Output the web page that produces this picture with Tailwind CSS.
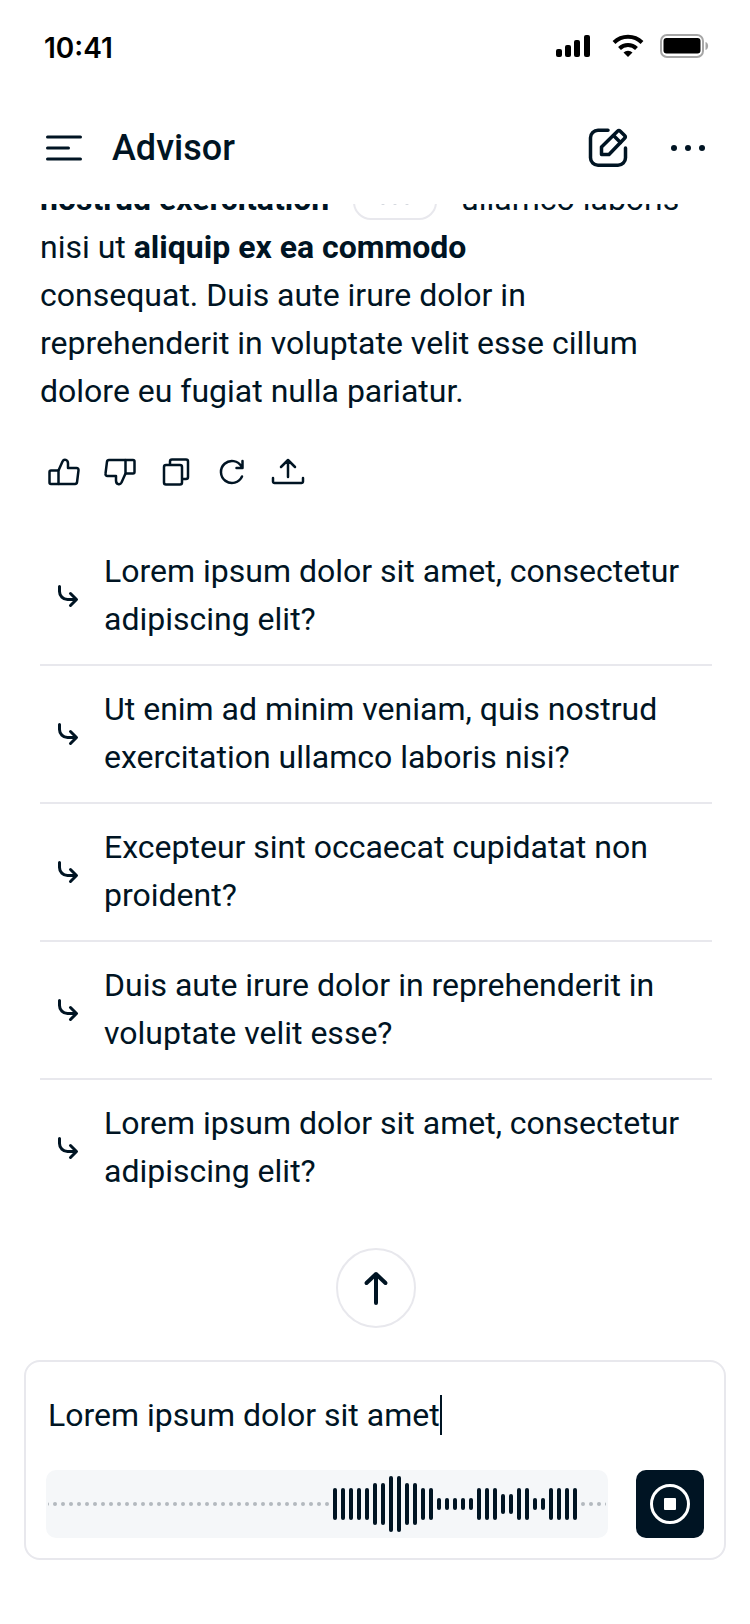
<!DOCTYPE html>
<html lang="en">

<head>
    <meta charset="utf-8">
    <meta name="viewport" content="width=device-width">
    <script src="https://cdn.jsdelivr.net/npm/@tailwindcss/browser@4"></script>
    <title>Advisor</title>
</head>

<body class="bg-white text-[#001423] font-['Roboto','Liberation_Sans',sans-serif]">
    <div class="flex flex-col min-h-screen">
        <!-- Status bar -->
        <div class="flex items-center justify-between h-24 pl-11 pr-10 text-black">
            <span class="font-['Inter','Liberation_Sans',sans-serif] text-[28px] font-semibold">10:41</span>
            <div class="flex items-center gap-4 pb-1">
                <svg class="w-10 h-6" viewBox="0 0 40 24" fill="currentColor" aria-hidden="true">
                    <rect x="0" y="15" width="6" height="8" rx="2" />
                    <rect x="9" y="11" width="6" height="12" rx="2" />
                    <rect x="18" y="6" width="6" height="17" rx="2" />
                    <rect x="28" y="1" width="6" height="22" rx="2" />
                </svg>
                <svg class="w-8 h-6" viewBox="0 0 32 24" fill="none" stroke="currentColor" stroke-width="4" aria-hidden="true">
                    <path d="M2 8.5a20 20 0 0 1 28 0" />
                    <path d="M7.500 14.500a12 12 0 0 1 17 0" />
                    <path d="M16 23l-4.500-4.500a6.500 6.500 0 0 1 9 0z" fill="currentColor" stroke="none" />
                </svg>
                <svg class="w-[50px] h-6" viewBox="0 0 50 24" fill="none" aria-hidden="true">
                    <rect x="1" y="1" width="42" height="22" rx="6" stroke="#a6a6a6" stroke-width="2" />
                    <rect x="3.500" y="4" width="37" height="15.500" rx="3" fill="#000" />
                    <path d="M45.500 8c3.500 1 3.500 7 0 8z" fill="#a6a6a6" />
                </svg>
            </div>
        </div>

        <!-- Header -->
        <header class="flex items-center h-[108px] pb-1 pl-10 pr-[38px]">
            <button type="button" class="flex items-center" aria-label="Menu">
                <svg class="w-12 h-12" viewBox="0 0 48 48" fill="none" stroke="currentColor" stroke-width="3" stroke-linecap="round">
                    <path d="M7.500 13h33M7.500 24h21M7.500 35h33" />
                </svg>
            </button>
            <h1 class="flex-1 ml-6 text-4xl font-medium">Advisor</h1>
            <div class="flex items-center gap-8">
                <button type="button" aria-label="New chat">
                    <svg class="w-12 h-12" viewBox="0 0 48 48" fill="none" stroke="currentColor" stroke-width="3.5" stroke-linecap="round" stroke-linejoin="round">
                        <path d="M24 6.200H14A7.500 7.500 0 0 0 6.500 13.700v20a7.500 7.500 0 0 0 7.500 7.500h20a7.500 7.500 0 0 0 7.500-7.500V24" />
                        <path d="M17.500 30.500v-7.500L33.500 7.200a2 2 0 0 1 2.800 0l4.300 4.300a2 2 0 0 1 0 2.800L25 30.500z" />
                        <path d="M29.500 11.500l7 7" />
                    </svg>
                </button>
                <button type="button" aria-label="More">
                    <svg class="w-12 h-12" viewBox="0 0 48 48" fill="currentColor">
                        <circle cx="10" cy="24" r="3" />
                        <circle cx="24" cy="24" r="3" />
                        <circle cx="38" cy="24" r="3" />
                    </svg>
                </button>
            </div>
        </header>

        <!-- Conversation -->
        <main class="flex-1 pl-10 pr-[38px] text-[32px]/12">
            <div class="flex flex-col justify-end h-[211px] overflow-hidden">
                <p>
                    <strong>nostrud exercitation</strong>
                    <button type="button" class="inline-flex items-center justify-center gap-2 w-[84px] h-9 pt-0.5 mx-4 border-2 border-[#e8e8ed] rounded-full align-middle" aria-label="Sources">
                        <span class="size-1 rounded-full bg-gray-300"></span>
                        <span class="size-1 rounded-full bg-gray-300"></span>
                        <span class="size-1 rounded-full bg-gray-300"></span>
                    </button>
                    ullamco laboris nisi ut <strong>aliquip ex ea commodo</strong><br>
                    consequat. Duis aute irure dolor in reprehenderit in voluptate velit esse cillum dolore eu fugiat nulla pariatur.
                </p>
            </div>

            <div class="flex gap-4 mt-[37px] mb-9 pl-1">
                <button type="button" aria-label="Good answer">
                    <svg class="size-10" viewBox="0 0 40 40" fill="none" stroke="currentColor" stroke-width="2.500" stroke-linejoin="round">
                        <path d="M7 18.500h7.500V32H7a1.500 1.500 0 0 1-1.500-1.500V20A1.500 1.500 0 0 1 7 18.500z" />
                        <path d="M14.500 18.500L18.500 9.500c1.500-3 5.500-2 5.500 2V16h8.500a2 2 0 0 1 2 2.300l-1.500 12a2 2 0 0 1-2 1.700H14.500" />
                    </svg>
                </button>
                <button type="button" aria-label="Bad answer">
                    <svg class="size-10 rotate-180" viewBox="0 0 40 40" fill="none" stroke="currentColor" stroke-width="2.500" stroke-linejoin="round">
                        <path d="M7 18.500h7.500V32H7a1.500 1.500 0 0 1-1.500-1.500V20A1.500 1.500 0 0 1 7 18.500z" />
                        <path d="M14.500 18.500L18.500 9.500c1.500-3 5.500-2 5.500 2V16h8.500a2 2 0 0 1 2 2.300l-1.500 12a2 2 0 0 1-2 1.700H14.500" />
                    </svg>
                </button>
                <button type="button" aria-label="Copy">
                    <svg class="size-10" viewBox="0 0 40 40" fill="none" stroke="currentColor" stroke-width="2.500" stroke-linejoin="round">
                        <rect x="8" y="13" width="18" height="19.500" rx="2" />
                        <path d="M14 13V9.500A2 2 0 0 1 16 7.500h14a2 2 0 0 1 2 2V25a2 2 0 0 1-2 2h-4" />
                    </svg>
                </button>
                <button type="button" aria-label="Retry">
                    <svg class="size-10" viewBox="0 0 40 40" fill="none" stroke="currentColor" stroke-width="2.500" stroke-linecap="round" stroke-linejoin="round">
                        <path d="M30 24.500a11 11 0 1 1-.500-10M30.500 9v7H24.500" />
                    </svg>
                </button>
                <button type="button" aria-label="Share">
                    <svg class="size-10" viewBox="0 0 40 40" fill="none" stroke="currentColor" stroke-width="2.500" stroke-linecap="round" stroke-linejoin="round">
                        <path d="M5 26v3.500A1.500 1.500 0 0 0 6.500 31h27a1.500 1.500 0 0 0 1.500-1.500V26M20 25V8.500M13 15l7-7 7 7" />
                    </svg>
                </button>
            </div>

            <!-- Follow-up questions -->
            <ul class="divide-y-2 divide-[#e8e8ed]">
                <li>
                    <button type="button" class="flex items-center gap-5 w-full pt-[19px] pb-[21px] pl-3 text-left">
                        <svg class="w-8 h-8 shrink-0" viewBox="0 0 32 32" fill="none" stroke="currentColor" stroke-width="3" stroke-linecap="round" stroke-linejoin="round">
                            <path d="M7.500 7.500v5a8 8 0 0 0 8 8H24M18.500 14.500l6 6-6 6" />
                        </svg>
                        <span>Lorem ipsum dolor sit amet, consectetur adipiscing elit?</span>
                    </button>
                </li>
                <li>
                    <button type="button" class="flex items-center gap-5 w-full pt-[19px] pb-[21px] pl-3 text-left">
                        <svg class="w-8 h-8 shrink-0" viewBox="0 0 32 32" fill="none" stroke="currentColor" stroke-width="3" stroke-linecap="round" stroke-linejoin="round">
                            <path d="M7.500 7.500v5a8 8 0 0 0 8 8H24M18.500 14.500l6 6-6 6" />
                        </svg>
                        <span>Ut enim ad minim veniam, quis nostrud exercitation ullamco laboris nisi?</span>
                    </button>
                </li>
                <li>
                    <button type="button" class="flex items-center gap-5 w-full pt-[19px] pb-[21px] pl-3 text-left">
                        <svg class="w-8 h-8 shrink-0" viewBox="0 0 32 32" fill="none" stroke="currentColor" stroke-width="3" stroke-linecap="round" stroke-linejoin="round">
                            <path d="M7.500 7.500v5a8 8 0 0 0 8 8H24M18.500 14.500l6 6-6 6" />
                        </svg>
                        <span>Excepteur sint occaecat cupidatat non proident?</span>
                    </button>
                </li>
                <li>
                    <button type="button" class="flex items-center gap-5 w-full pt-[19px] pb-[21px] pl-3 text-left">
                        <svg class="w-8 h-8 shrink-0" viewBox="0 0 32 32" fill="none" stroke="currentColor" stroke-width="3" stroke-linecap="round" stroke-linejoin="round">
                            <path d="M7.500 7.500v5a8 8 0 0 0 8 8H24M18.500 14.500l6 6-6 6" />
                        </svg>
                        <span>Duis aute irure dolor in reprehenderit in voluptate velit esse?</span>
                    </button>
                </li>
                <li>
                    <button type="button" class="flex items-center gap-5 w-full pt-[19px] pb-[21px] pl-3 text-left">
                        <svg class="w-8 h-8 shrink-0" viewBox="0 0 32 32" fill="none" stroke="currentColor" stroke-width="3" stroke-linecap="round" stroke-linejoin="round">
                            <path d="M7.500 7.500v5a8 8 0 0 0 8 8H24M18.500 14.500l6 6-6 6" />
                        </svg>
                        <span>Lorem ipsum dolor sit amet, consectetur adipiscing elit?</span>
                    </button>
                </li>
            </ul>
        </main>

        <div class="flex justify-center mb-8 pl-0.5">
            <button type="button" class="flex items-center justify-center size-20 border-2 border-[#e8e8ed] rounded-full" aria-label="Scroll up">
                <svg class="size-10" viewBox="0 0 40 40" fill="none" stroke="currentColor" stroke-width="4" stroke-linecap="round" stroke-linejoin="round">
                    <path d="M20 35V6M10.500 15L20 6l9.500 9" />
                </svg>
            </button>
        </div>

        <!-- Composer -->
        <form class="mx-6 mb-16 px-5 pt-[25px] pb-5 border-2 border-[#e8e8ed] rounded-2xl">
            <div class="flex items-center h-14 pl-0.5">
                <input type="text" value="Lorem ipsum dolor sit amet" class="field-sizing-content text-[32px]/12 outline-none" aria-label="Message">
                <span class="w-0.5 h-10 bg-[#001423]"></span>
            </div>
            <div class="flex gap-7 mt-[27px]">
                <div class="flex-1 min-w-0 h-[68px] px-0.5 bg-[#f5f7f9] rounded-[10px]">
                    <div id="wave" class="flex items-center justify-center gap-1 h-full overflow-hidden"></div>
                </div>
                <button type="button" class="flex items-center justify-center size-[68px] bg-[#001423] rounded-[10px] text-white" aria-label="Stop recording">
                    <svg class="size-10" viewBox="0 0 40 40" fill="none">
                        <circle cx="20" cy="20" r="18.500" stroke="currentColor" stroke-width="3" />
                        <rect x="14" y="14" width="12" height="12" rx="1" fill="currentColor" />
                    </svg>
                </button>
            </div>
        </form>
    </div>

    <script>
        // 0 is a silent sample, drawn as a dot
        const levels = [
            ...Array(36).fill(0),
            32, 32, 32, 32, 32, 42, 42, 56, 56, 42, 42, 32, 32,
            12, 12, 12, 12, 12, 32, 32, 32, 20, 20, 32, 32, 12, 12, 32, 32, 32, 32,
            0, 0, 0, 0
        ];
        const wave = document.getElementById('wave');
        levels.forEach(function (level) {
            const bar = document.createElement('span');
            bar.className = level ? 'w-1 shrink-0 rounded-full bg-[#001423]' : 'size-1 shrink-0 rounded-full bg-[#b3b9bf]';
            if (level) bar.style.height = level + 'px';
            wave.appendChild(bar);
        });
    </script>
</body>

</html>
